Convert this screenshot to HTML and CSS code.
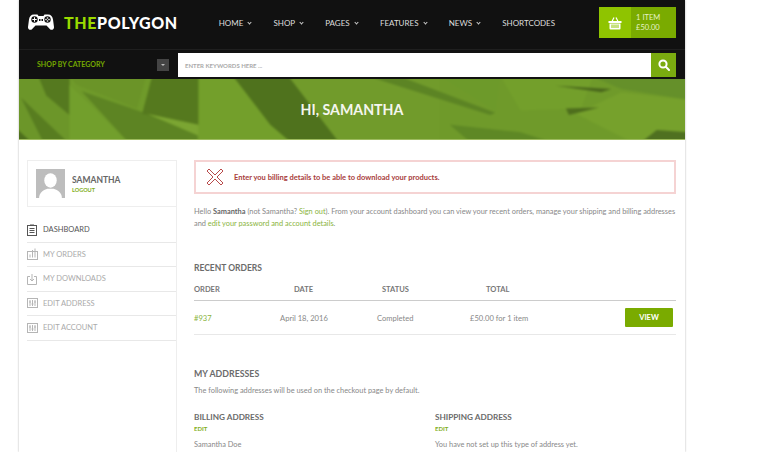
FILE: index.html
```html
<!DOCTYPE html>
<html lang="en">
<head>
    <meta charset="UTF-8">
    <title>The Polygon - My Account</title>
    <link rel="stylesheet" href="styles.css">
</head>
<body>
    <div class="page">
        <header class="top">
            <a class="logo">
                <svg class="pad" viewBox="0 0 26 17" width="26" height="17">
                    <path fill="#fff" d="M6 .5h3.500l1 1.500h5l1-1.500H20c3 0 4.600 2 5 5l1 7.500c.2 2.500-2.500 3.800-4.200 2L18.500 11.500h-11L4.200 15c-1.700 1.800-4.400.5-4.200-2l1-7.500C1.400 2.500 3 .5 6 .5z"/>
                    <circle cx="6.500" cy="5.500" r="3.200" fill="#111"/>
                    <path fill="#fff" d="M6 3.300h1v1.700h1.700v1H7v1.700H6V6H4.300V5H6z"/>
                    <circle cx="19.500" cy="5.500" r="3.200" fill="#111"/>
                    <circle cx="19.500" cy="4" r=".8" fill="#fff"/>
                    <circle cx="19.500" cy="7" r=".8" fill="#fff"/>
                    <circle cx="18" cy="5.500" r=".8" fill="#fff"/>
                    <circle cx="21" cy="5.500" r=".8" fill="#fff"/>
                    <path fill="#111" d="M11 5h1.500v2H11zM13.500 5H15v2h-1.500z"/>
                </svg>
                <span class="logo-text"><b>THE</b>POLYGON</span>
            </a>
            <nav class="menu">
                <a>Home <i class="caret"></i></a>
                <a>Shop <i class="caret"></i></a>
                <a>Pages <i class="caret"></i></a>
                <a>Features <i class="caret"></i></a>
                <a>News <i class="caret"></i></a>
                <a>Shortcodes</a>
            </nav>
            <div class="cart">
                <div class="cart-icon">
                    <svg viewBox="0 0 14 14" width="14" height="14" fill="none" stroke="#fff">
                        <path stroke-width="1.200" d="M4 5.500L6 1.500M10 5.500L8 1.500"/>
                        <path fill="#fff" stroke="none" d="M.5 5h13v2H.5zM1.500 7.500h11v5a1 1 0 0 1-1 1h-9a1 1 0 0 1-1-1z"/>
                        <path stroke="#8fc400" stroke-width="1" d="M4 8.500v3.500M6 8.500v3.500M8 8.500v3.500M10 8.500v3.500"/>
                    </svg>
                </div>
                <div class="cart-info">1 Item<br>£50.00</div>
            </div>
        </header>

        <div class="searchbar">
            <div class="category">
                <span>Shop by category</span>
                <i class="cat-toggle"></i>
            </div>
            <div class="search">
                <span class="placeholder">Enter keywords here ...</span>
                <div class="search-btn">
                    <svg viewBox="0 0 12 12" width="12" height="12" fill="none" stroke="#fff" stroke-width="2">
                        <circle cx="5" cy="5" r="3.600"/>
                        <path stroke-linecap="round" d="M7.800 7.800L11 11"/>
                    </svg>
                </div>
            </div>
        </div>

        <section class="hero">
            <svg class="hero-bg" viewBox="0 0 666 61" preserveAspectRatio="none">
                <rect width="666" height="61" fill="#6f9a2a"/>
                <!-- left half -->
                <path fill="#6c9629" d="M0 0h53v61H0z"/>
                <path fill="#55791f" d="M22 0h31v36L30 18z"/>
                <path fill="#587d20" d="M5 20l46 41H27z"/>
                <path fill="#4e6f1d" d="M0 48l15 13H0z"/>
                <path fill="#6b9428" d="M53 0h76l-9 30-60-22z"/>
                <path fill="#729f2c" d="M53 8l58 53H53z"/>
                <path fill="#5d8423" d="M65 14l65 21 50 20v6h-69z"/>
                <path fill="#55791e" d="M135 0h46v46l-56-11z"/>
                <path fill="#7ba532" d="M130 35l51 10v10z"/>
                <path fill="#739f2b" d="M181 0h34l65 61h-99z"/>
                <path fill="#4f721d" d="M215 0h55l50 61h-48l-20-16z"/>
                <path fill="#719b2b" d="M270 0h150v61H320z"/>
                <!-- right half -->
                <path fill="#5c8424" d="M355 2l30 0 90 32-5 2z"/>
                <path fill="#6d9a2a" d="M420 0h60l-5 32z"/>
                <path fill="#739f2b" d="M480 0h92l-12 30-60 2z"/>
                <path fill="#5e8825" d="M430 45l70 7 30 9h-80z"/>
                <path fill="#65902a" d="M570 0h96v22l-66-10z"/>
                <path fill="#76a12c" d="M555 35l45-20 66 7v39h-56z"/>
                <path fill="#4a681c" d="M535 9l55 3-10 3z"/>
                <path fill="#4e6e1d" d="M545 30l33-1-30 7z"/>
                <path fill="#4f7020" d="M620 61l15-11 31 2v9z"/>
            </svg>
            <h1>Hi, Samantha</h1>
        </section>

        <div class="content">
            <aside class="side">
                <div class="user-box">
                    <div class="avatar">
                        <svg viewBox="0 0 28 28" width="29" height="29">
                            <rect width="28" height="28" fill="#bdbdbd"/>
                            <ellipse cx="14" cy="11" rx="6" ry="7" fill="#fff"/>
                            <path fill="#fff" d="M3 28c0-6 5-8 8-9h6c3 1 8 3 8 9z"/>
                        </svg>
                    </div>
                    <div>
                        <div class="user-name">Samantha</div>
                        <a class="logout">Logout</a>
                    </div>
                </div>
                <ul class="side-nav">
                    <li class="active">
                        <svg viewBox="0 0 11 12" width="11" height="12" fill="none" stroke="#555"><rect x=".5" y="1.500" width="9" height="10"/><path d="M3 1h4M2.500 4.500h5M2.500 6.500h5M2.500 8.500h5"/></svg>
                        Dashboard
                    </li>
                    <li>
                        <svg viewBox="0 0 11 12" width="11" height="12" fill="none" stroke="#b5b5b5"><rect x=".5" y="3.500" width="10" height="8"/><path d="M3 9.500v-3M5.500 9.500V2M8 9.500V.5"/></svg>
                        My orders
                    </li>
                    <li>
                        <svg viewBox="0 0 11 12" width="11" height="12" fill="none" stroke="#b5b5b5"><path d="M3 3.500H.5v8h9v-8H7M5 1v7M3 6l2 2 2-2"/></svg>
                        My downloads
                    </li>
                    <li>
                        <svg viewBox="0 0 11 12" width="11" height="12" fill="none" stroke="#b5b5b5"><rect x=".5" y="1.500" width="10" height="9"/><path d="M3 3v6M5.500 3v6M8 3v6M2 5h2M4.500 7h2M7 5h2"/></svg>
                        Edit address
                    </li>
                    <li>
                        <svg viewBox="0 0 11 12" width="11" height="12" fill="none" stroke="#b5b5b5"><rect x=".5" y="1.500" width="10" height="9"/><path d="M3 3v6M5.500 3v6M8 3v6M2 5h2M4.500 7h2M7 5h2"/></svg>
                        Edit account
                    </li>
                </ul>
            </aside>

            <main class="main">
                <div class="alert">
                    <svg viewBox="0 0 18 18" width="18" height="18" fill="none" stroke="#b84a4a" stroke-width="1">
                        <path d="M1 3L3 1l6 6 6-6 2 2-6 6 6 6-2 2-6-6-6 6-2-2 6-6z"/>
                    </svg>
                    <span>Enter you billing details to be able to download your products.</span>
                </div>
                <p class="intro">Hello <b>Samantha</b> (not Samantha? <a>Sign out</a>). From your account dashboard you can view your recent orders, manage your shipping and billing addresses and <a>edit your password and account details</a>.</p>

                <h2 class="orders-title">Recent orders</h2>
                <div class="orders-head">
                    <span class="col-order">Order</span>
                    <span class="col-date">Date</span>
                    <span class="col-status">Status</span>
                    <span class="col-total">Total</span>
                </div>
                <div class="orders-row">
                    <a class="col-order">#937</a>
                    <span class="col-date">April 18, 2016</span>
                    <span class="col-status">Completed</span>
                    <span class="col-total">£50.00 for 1 item</span>
                    <a class="view-btn">View</a>
                </div>

                <h2 class="addr-title">My addresses</h2>
                <p class="addr-note">The following addresses will be used on the checkout page by default.</p>
                <div class="addresses">
                    <div>
                        <h3>Billing address</h3>
                        <a class="edit">Edit</a>
                        <p>Samantha Doe</p>
                    </div>
                    <div>
                        <h3>Shipping address</h3>
                        <a class="edit">Edit</a>
                        <p>You have not set up this type of address yet.</p>
                    </div>
                </div>
            </main>
        </div>
    </div>
</body>
</html>
```

FILE: styles.css
```css
* {
    margin: 0;
    padding: 0;
    box-sizing: border-box;
}
html, body {
    height: 452px;
    overflow: hidden;
    background: white;
}
body {
    font-family: Lato, 'Open Sans', sans-serif;
    font-size: 8px;
    color: #777;
}
.page {
    position: relative;
    width: 666px;
    height: 452px;
    margin-left: 19px;
    box-shadow: 0 0 2px rgba(0, 0, 0, 0.3);
    background: white;
}
.top {
    display: flex;
    align-items: center;
    height: 50px;
    padding: 0 9px 4px;
    background: #111;
    border-bottom: 1px solid #1f1f1f;
}
.logo {
    display: flex;
    align-items: center;
    width: 191px;
    gap: 10px;
}
.logo-text {
    font-size: 16px;
    font-weight: 900;
    letter-spacing: 0.6px;
    color: #fff;
}
.logo-text b {
    color: #9bdb00;
    font-weight: 900;
}
.menu {
    display: flex;
    width: 381px;
    gap: 22.200px;
}
.menu a {
    font-size: 8px;
    text-transform: uppercase;
    color: #ddd;
    white-space: nowrap;
}
.caret {
    display: inline-block;
    width: 3px;
    height: 3px;
    margin: 0 0 2px 3px;
    border-right: 1px solid #ccc;
    border-bottom: 1px solid #ccc;
    transform: rotate(45deg);
}
.cart {
    display: flex;
    width: 77px;
    height: 31px;
    color: #e6f2c8;
    font-size: 7.500px;
    line-height: 10px;
    text-transform: uppercase;
}
.cart-icon {
    display: flex;
    align-items: center;
    justify-content: center;
    width: 32px;
    background: #8fc400;
}
.cart-info {
    flex: 1;
    padding: 6px 0 0 5px;
    background: #7aab00;
}
.searchbar {
    display: flex;
    height: 29px;
    padding: 3px 9px 2px 0;
    background: #111;
}
.category {
    display: flex;
    align-items: center;
    justify-content: space-between;
    width: 159px;
    padding: 0 9px 0 18px;
    font-size: 7px;
    font-weight: 700;
    text-transform: uppercase;
    color: #74a800;
}
.category span {
    margin-bottom: 3px;
}
.cat-toggle {
    width: 12px;
    height: 12px;
    background: #444;
    position: relative;
}
.cat-toggle::after {
    content: "";
    position: absolute;
    left: 4px;
    top: 5px;
    border: 2px solid transparent;
    border-top-color: #bbb;
}
.search {
    display: flex;
    flex: 1;
    align-items: center;
    justify-content: space-between;
    background: #fff;
}
.placeholder {
    padding-left: 7px;
    font-size: 6px;
    font-weight: 700;
    text-transform: uppercase;
    color: #aaa;
}
.search-btn {
    display: flex;
    align-items: center;
    justify-content: center;
    width: 25px;
    height: 100%;
    background: #7aab10;
}
.hero {
    position: relative;
    display: flex;
    align-items: center;
    justify-content: center;
    height: 61px;
    overflow: hidden;
    border-bottom: 1px solid #9dbb5e;
}
.hero-bg {
    position: absolute;
    left: -3px;
    top: -3px;
    width: calc(100% + 6px);
    height: calc(100% + 6px);
    filter: blur(1px);
}
.hero h1 {
    position: relative;
    font-size: 14.200px;
    font-weight: 700;
    text-transform: uppercase;
    color: #f4f6ee;
}
.content {
    display: flex;
    padding: 20px 9px 0 8px;
    gap: 17px;
}
.side {
    width: 150px;
    flex-shrink: 0;
    min-height: 312px;
    border-right: 1px solid #eee;
}
.user-box {
    display: flex;
    align-items: center;
    gap: 7px;
    width: 150px;
    height: 47px;
    padding-left: 8px;
    border: 1px solid #eee;
}
.avatar {
    height: 29px;
}
.user-name {
    font-size: 8.500px;
    font-weight: 700;
    text-transform: uppercase;
    color: #666;
}
.logout {
    display: block;
    margin-top: 2px;
    font-size: 5.500px;
    font-weight: 700;
    text-transform: uppercase;
    color: #7fae1a;
}
.side-nav {
    list-style: none;
    margin-top: 11px;
}
.side-nav li {
    display: flex;
    align-items: center;
    gap: 5px;
    height: 24.500px;
    font-size: 7.500px;
    text-transform: uppercase;
    color: #aaa;
    border-bottom: 1px solid #e8e8e8;
}
.side-nav .active {
    color: #555;
}
.main {
    flex: 1;
    min-width: 0;
}
.alert {
    display: flex;
    align-items: center;
    gap: 10px;
    height: 34px;
    padding-left: 10px;
    border: 2px solid #f5d3d3;
    font-size: 7.500px;
    font-weight: 700;
    color: #a83c3c;
}
.intro {
    margin-top: 12px;
    font-size: 7.400px;
    line-height: 12px;
    color: #888;
}
.intro b {
    color: #666;
}
.intro a {
    color: #8ab43c;
}
.orders-title {
    margin-top: 33px;
    font-size: 8.500px;
    font-weight: 700;
    text-transform: uppercase;
    color: #6b6b6b;
}
.orders-head, .orders-row {
    position: relative;
    display: flex;
    align-items: center;
}
.orders-head {
    height: 22px;
    margin-top: 6px;
    font-size: 7.500px;
    font-weight: 700;
    text-transform: uppercase;
    color: #777;
    border-bottom: 1px solid #ccc;
}
.orders-row {
    height: 34px;
    font-size: 7.600px;
    color: #888;
    border-bottom: 1px solid #e8e8e8;
}
.col-order { width: 86px; color: inherit; }
.orders-row .col-order { color: #8ab43c; }
.col-date { width: 97px; padding-left: 14px; }
.orders-row .col-date { padding-left: 0; }
.col-status { width: 97px; }
.orders-head .col-status { padding-left: 5px; width: 109px; }
.orders-row .col-total { margin-left: -4px; }
.view-btn {
    margin-left: auto;
    margin-right: 3px;
    width: 48px;
    height: 19px;
    line-height: 19px;
    text-align: center;
    background: #7aab00;
    color: #fff;
    font-size: 7.500px;
    font-weight: 700;
    text-transform: uppercase;
    border-radius: 1px;
}
.addr-title {
    margin-top: 33px;
    font-size: 8.800px;
    font-weight: 700;
    text-transform: uppercase;
    color: #6b6b6b;
}
.addr-note {
    margin-top: 7px;
    font-size: 7.400px;
    color: #888;
}
.addresses {
    display: grid;
    grid-template-columns: 241px 1fr;
    margin-top: 17px;
}
.addresses h3 {
    font-size: 8.200px;
    font-weight: 700;
    text-transform: uppercase;
    color: #6b6b6b;
}
.edit {
    display: block;
    margin-top: 3px;
    font-size: 6px;
    font-weight: 700;
    text-transform: uppercase;
    color: #7fae1a;
}
.addresses p {
    margin-top: 8px;
    font-size: 7.400px;
    color: #888;
}
```
